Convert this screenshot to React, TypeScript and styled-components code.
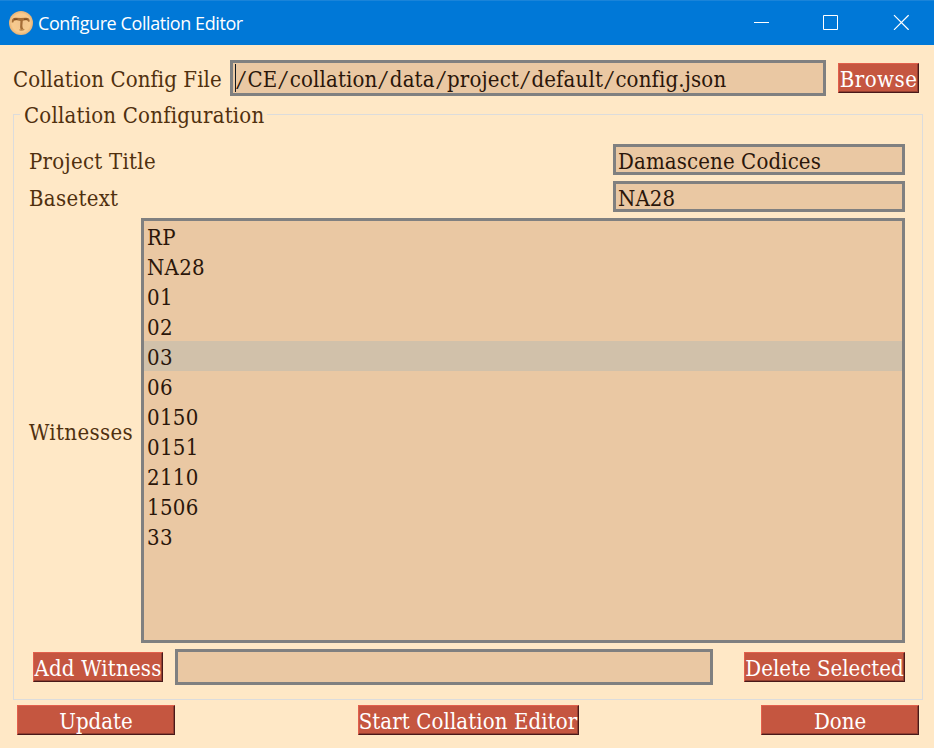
import React, { Fragment, useState } from 'react';
import styled, { createGlobalStyle } from 'styled-components';

const Global = createGlobalStyle`
  * { box-sizing: border-box; }
  body { margin: 0; background: #ffe8c6; overflow: hidden; }
`;

const Window = styled.div`
  width: 934px;
  height: 748px;
  display: flex;
  flex-direction: column;
  background: #ffe8c6;
  color: #50300f;
  font: condensed 22px "DejaVu Serif", serif;
  line-height: 30px;
  font-variant-ligatures: none;
  white-space: nowrap;
`;

const TitleBar = styled.header`
  height: 45px;
  flex: none;
  display: flex;
  align-items: center;
  padding: 0 0 0 9px;
  background: #0078d7;
  border-top: 1px solid #1a84d9;
  color: #fff;
`;

const WindowTitle = styled.h1`
  margin: -1px auto 0 5px;
  font: 400 18px/24px "Open Sans", sans-serif;
  letter-spacing: -0.42px;
`;

const CaptionButton = styled.button`
  width: 70px;
  height: 44px;
  padding: 0;
  border: 0;
  display: flex;
  align-items: center;
  justify-content: center;
  background: transparent;
`;

const CaptionGroup = styled.div`
  display: flex;
  margin: -2px -2px 0 0;
`;

const Label = styled.label<{ $track?: number }>`
  letter-spacing: ${p => p.$track ?? 0}px;
`;

const Field = styled.input<{ $width: number; $tall?: boolean; $track?: number }>`
  width: ${p => p.$width}px;
  height: ${p => (p.$tall ? 36 : 31)}px;
  flex: none;
  padding: 3px 2px 0;
  border: 3px solid #808080;
  border-radius: 0;
  outline: none;
  background: #eac8a3;
  color: #2a160a;
  font: inherit;
  line-height: 26px;
  letter-spacing: ${p => p.$track ?? 0}px;
`;

const PathField = styled.div`
  width: 596px;
  height: 36px;
  margin-left: auto;
  display: flex;
  align-items: center;
  padding: 3px 1px 0;
  border: 3px solid #808080;
  background: #eac8a3;
  color: #2a160a;
  letter-spacing: 0.15px;
`;

const Slash = styled.span`
  width: 12.4px;
  flex: none;
  text-align: center;
  transform: skewX(-10deg);
`;

const Caret = styled.span`
  width: 1px;
  height: 28px;
  margin: -3px -1px 0 1px;
  background: #101820;
`;

const PushButton = styled.button<{ $width: number; $track?: number }>`
  width: ${p => p.$width}px;
  height: 30px;
  flex: none;
  display: flex;
  justify-content: center;
  padding: 1px 0 0;
  border: 1px solid;
  border-color: #e2604c #48191a #48191a #e2604c;
  box-shadow: inset -1px -1px #933f30;
  background: #c55640;
  color: #fff;
  font: inherit;
  line-height: 30px;
  letter-spacing: ${p => p.$track ?? 0}px;
`;

const FileRow = styled.div`
  height: 36px;
  margin: 15px 15px 0 13px;
  display: flex;
  align-items: center;
  flex: none;
  ${PushButton} { margin-left: 12px; }
  ${Label} { padding-top: 3px; }
`;

const Group = styled.fieldset`
  width: 910px;
  height: 601px;
  flex: none;
  margin: 3px 0 0 13px;
  padding: 15px 17px 0 15px;
  border: 1px solid #dcdcdc;
`;

const GroupTitle = styled.legend`
  height: 30px;
  margin-left: -9px;
  padding: 2px 3px 0 4px;
  letter-spacing: 0.2px;
`;

const FormRow = styled.div`
  height: 37px;
  display: flex;
  align-items: flex-start;
  justify-content: space-between;
  ${Label} { padding-top: 3px; }
`;

const ListRow = styled.div`
  height: 425px;
  display: flex;
  align-items: center;
  justify-content: space-between;
  ${Label} { padding-top: 4px; }
`;

const ListBox = styled.ul`
  width: 764px;
  height: 425px;
  margin: 0;
  padding: 0;
  border: 3px solid #808080;
  list-style: none;
  background: #eac8a3;
  color: #2a160a;
  letter-spacing: 0.3px;
`;

const Item = styled.li<{ $selected: boolean }>`
  height: 30px;
  padding: 2px 0 0 3px;
  line-height: 30px;
  background: ${p => (p.$selected ? '#d1c1aa' : 'transparent')};
`;

const ActionRow = styled.div`
  height: 36px;
  margin: 6px 0 0 4px;
  display: flex;
  align-items: center;
  ${Field} { margin: 0 auto 0 12px; }
`;

const Footer = styled.footer`
  margin: 5px 15px 0 17px;
  display: flex;
  justify-content: space-between;
`;

const witnesses = ['RP', 'NA28', '01', '02', '03', '06', '0150', '0151', '2110', '1506', '33'];
const configPath = ['CE', 'collation', 'data', 'project', 'default', 'config.json'];

function AppIcon() {
  return (
    <svg width="24" height="24" viewBox="0 0 24 24">
      <defs>
        <radialGradient id="disc">
          <stop offset="0" stopColor="#f0c48e" />
          <stop offset="0.75" stopColor="#f8cb8e" />
          <stop offset="1" stopColor="#e6b276" />
        </radialGradient>
      </defs>
      <circle cx="12" cy="12" r="12" fill="url(#disc)" />
      <path d="M2.800 11.500c-.3-3.200 1-4.800 4-4.700l5 .3 5-.3c2.800-.1 3.800.9 4 3.700l-1.600.2c-.6-1.200-1.500-1.500-3-1.400l-2.400.5-.4 4.500c0 1.600.3 2.900 1.300 4l-2.700.7c-.9-1.500-1-3-.8-4.700l.2-4.300-3.600-.7c-2-.2-3.200.5-3.500 2.200z" fill="#a46d36" />
      <path d="M5 8.300h3.500M15 8.300h3.500" stroke="#7f4d20" strokeWidth="1.600" />
      <path d="M10.500 18.600c1.600.8 3.500.7 4.800-.3" fill="none" stroke="#bd884c" strokeWidth="1.200" />
    </svg>
  );
}

export default function App() {
  const [selected, setSelected] = useState('03');
  return (
    <>
      <Global />
      <Window>
        <TitleBar>
          <AppIcon />
          <WindowTitle>Configure Collation Editor</WindowTitle>
          <CaptionGroup>
            <CaptionButton aria-label="Minimize">
              <svg width="16" height="16"><path d="M1 8.500h15" stroke="#fff" /></svg>
            </CaptionButton>
            <CaptionButton aria-label="Maximize">
              <svg width="16" height="16"><path d="M.5 1.500h14v14H.5z" fill="none" stroke="#fff" /></svg>
            </CaptionButton>
            <CaptionButton aria-label="Close">
              <svg width="16" height="16"><path d="M1 1.200l14.600 14.600M15.600 1.200L1 15.800" stroke="#fff" strokeWidth="1.200" /></svg>
            </CaptionButton>
          </CaptionGroup>
        </TitleBar>

        <FileRow>
          <Label $track={0.07}>Collation Config File</Label>
          <PathField>
            <Caret />
            {configPath.map(part => (
              <Fragment key={part}><Slash>/</Slash>{part}</Fragment>
            ))}
          </PathField>
          <PushButton $width={81} $track={0.5}>Browse</PushButton>
        </FileRow>

        <Group>
          <GroupTitle>Collation Configuration</GroupTitle>
          <FormRow>
            <Label $track={0.27}>Project Title</Label>
            <Field $width={292} $track={0.12} defaultValue="Damascene Codices" />
          </FormRow>
          <FormRow>
            <Label $track={0.3}>Basetext</Label>
            <Field $width={292} $track={0.1} defaultValue="NA28" />
          </FormRow>
          <ListRow>
            <Label $track={0.35}>Witnesses</Label>
            <ListBox>
              {witnesses.map(w => (
                <Item key={w} $selected={w === selected} onClick={() => setSelected(w)}>{w}</Item>
              ))}
            </ListBox>
          </ListRow>
          <ActionRow>
            <PushButton $width={130} $track={0.2}>Add Witness</PushButton>
            <Field $width={538} $tall />
            <PushButton $width={161}>Delete Selected</PushButton>
          </ActionRow>
        </Group>

        <Footer>
          <PushButton $width={158}>Update</PushButton>
          <PushButton $width={221} $track={0.1}>Start Collation Editor</PushButton>
          <PushButton $width={158}>Done</PushButton>
        </Footer>
      </Window>
    </>
  );
}
